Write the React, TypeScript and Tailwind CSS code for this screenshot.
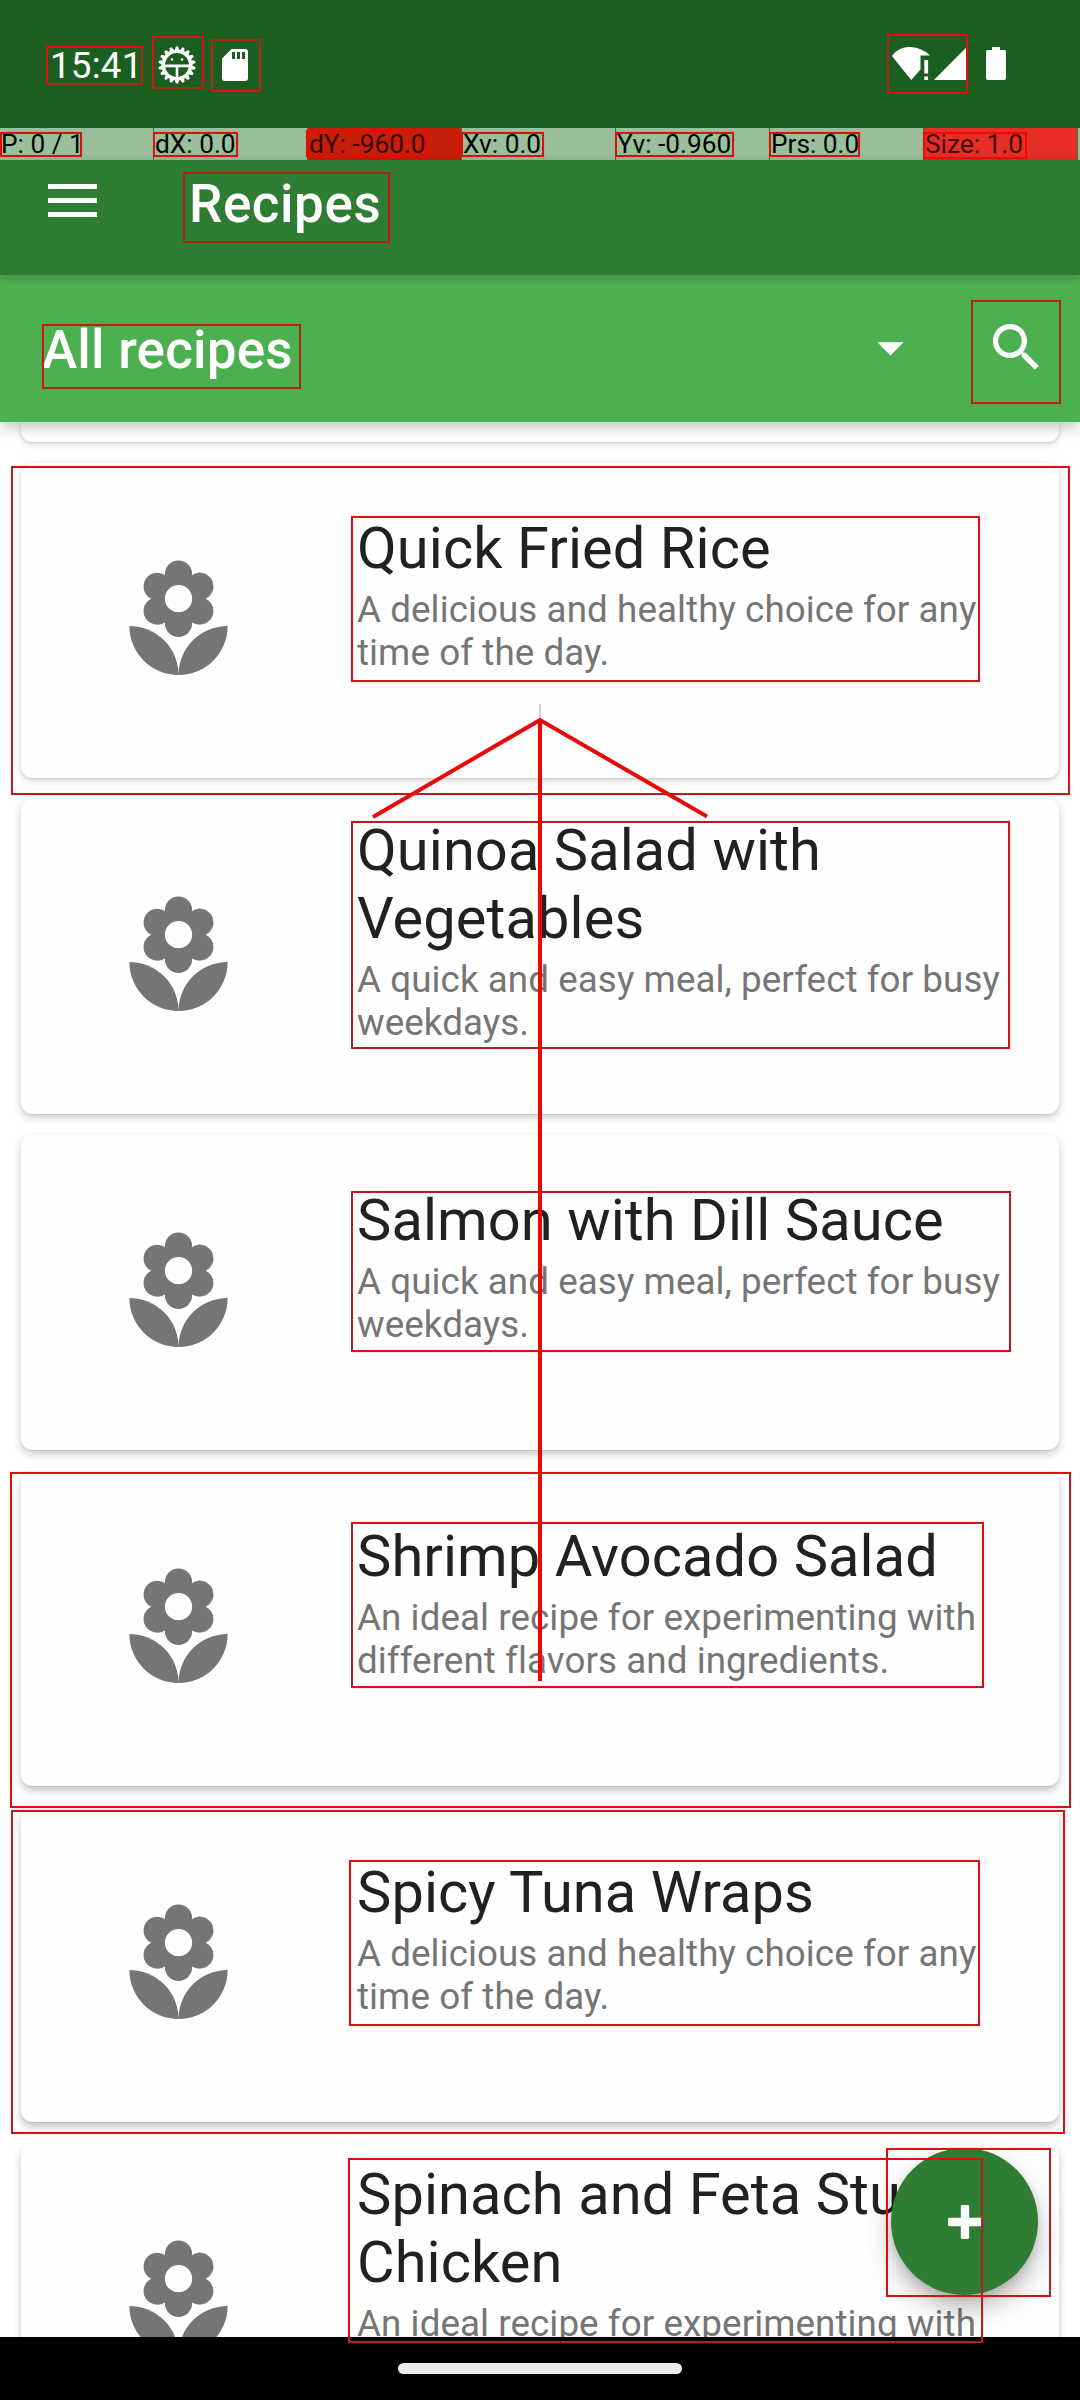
import React from "react";
import { MdArrowDropDown, MdLocalFlorist, MdSearch } from "react-icons/md";

const QUICK = "A quick and easy meal, perfect for busy weekdays.";
const DELICIOUS = "A delicious and healthy choice for any time of the day.";
const IDEAL = "An ideal recipe for experimenting with different flavors and ingredients.";

const recipes = [
  { title: "Quick Fried Rice", text: DELICIOUS, shadow: "shadow-[0_2px_7px_rgba(0,0,0,0.2),0_1px_1px_rgba(0,0,0,0.07)]" },
  { title: "Quinoa Salad with Vegetables", text: QUICK, shadow: "shadow-[0_3px_8px_rgba(0,0,0,0.22),0_1px_1px_rgba(0,0,0,0.07)]" },
  { title: "Salmon with Dill Sauce", text: QUICK, shadow: "shadow-[0_4px_8px_rgba(0,0,0,0.22),0_1px_1px_rgba(0,0,0,0.07)]" },
  { title: "Shrimp Avocado Salad", text: IDEAL, shadow: "shadow-[0_5px_8px_rgba(0,0,0,0.22),0_1px_1px_rgba(0,0,0,0.07)]" },
  { title: "Spicy Tuna Wraps", text: DELICIOUS, shadow: "shadow-[0_5px_9px_rgba(0,0,0,0.24),0_1px_1px_rgba(0,0,0,0.07)]" },
  { title: "Spinach and Feta Stuffed Chicken", text: IDEAL, shadow: "shadow-[0_6px_9px_rgba(0,0,0,0.24),0_1px_1px_rgba(0,0,0,0.07)]" },
];

const pointerCells = [
  { label: "P: 0 / 1", tone: "bg-[#99c09b] text-black" },
  { label: "dX: 0.0", tone: "bg-[#99c09b] text-black" },
  { label: "dY: -960.0", tone: "bg-[#c81e0c] text-[#3a0603]" },
  { label: "Xv: 0.0", tone: "bg-[#99c09b] text-black" },
  { label: "Yv: -0.960", tone: "bg-[#99c09b] text-black" },
  { label: "Prs: 0.0", tone: "bg-[#99c09b] text-black" },
  { label: "Size: 1.0", tone: "bg-[#e62e27] text-[#430a08]" },
];

const plain = "border-[#dd0f0f]";
const dim = "border-[#dd0f0f] border-r-[#a82a14] border-b-[#a82a14]";

// Bounds of each highlighted element: left, top, right, bottom.
const bounds: { box: [number, number, number, number]; tone: string }[] = [
  { box: [46, 46, 143, 85], tone: dim },
  { box: [152, 36, 204, 89], tone: "border-[#dd0f0f] border-b-[#a82a14]" },
  { box: [211, 39, 261, 92], tone: "border-[#a82a14] border-b-[#dd0f0f]" },
  { box: [887, 34, 968, 94], tone: "border-[#dd0f0f] border-l-[#a82a14]" },
  { box: [0, 132, 82, 157], tone: plain },
  { box: [153, 132, 238, 157], tone: plain },
  { box: [306, 130, 427, 157], tone: "border-[#f00a04]" },
  { box: [461, 132, 544, 157], tone: plain },
  { box: [615, 132, 734, 157], tone: plain },
  { box: [769, 132, 860, 157], tone: plain },
  { box: [923, 132, 1027, 159], tone: "border-[#f00a04]" },
  { box: [183, 172, 390, 243], tone: "border-[#a82a14] border-r-[#dd0f0f]" },
  { box: [42, 324, 301, 389], tone: dim },
  { box: [971, 300, 1061, 404], tone: "border-[#c81e0c] border-l-[#a82a14] border-r-[#a82a14]" },
  { box: [11, 466, 1070, 795], tone: "border-[#dd0f0f] border-l-[#b02024] border-b-[#b02024]" },
  { box: [351, 516, 980, 682], tone: plain },
  { box: [351, 821, 1010, 1049], tone: "border-[#b02024] border-r-[#dd0f0f]" },
  { box: [351, 1191, 1011, 1352], tone: "border-[#b02024] border-b-[#dd0f0f]" },
  { box: [10, 1472, 1071, 1808], tone: "border-[#dd0f0f] border-r-[#b02024]" },
  { box: [351, 1522, 984, 1688], tone: "border-[#dd0f0f] border-l-[#b02024]" },
  { box: [11, 1810, 1065, 2134], tone: "border-[#dd0f0f] border-l-[#b02024]" },
  { box: [349, 1860, 980, 2026], tone: plain },
  { box: [348, 2158, 983, 2343], tone: "border-[#dd0f0f] border-b-[#b02024] border-r-[#b02024]" },
  { box: [886, 2148, 1051, 2297], tone: "border-[#dd0f0f] border-r-[#b02024]" },
];

function BugIcon() {
  const teeth = Array.from({ length: 18 }, (_, i) => i * 20);
  return (
    <svg className="h-[40px] w-[40px]" viewBox="-20 -20 40 40" fill="#fff">
      {teeth.map((a) => (
        <path key={a} d="M-2.6 -14 L-1.1 -18.6 L1.1 -18.6 L2.6 -14 Z" transform={`rotate(${a})`} />
      ))}
      <circle r="13.6" fill="none" stroke="#fff" strokeWidth="3.4" />
      <path d="M-12.5 -0.4 H12.5 V2.2 H1.3 V13 H-1.3 V2.2 H-12.5 Z" />
      <circle cx="-5" cy="-5.5" r="1.3" />
      <circle cx="5" cy="-5.5" r="1.3" />
    </svg>
  );
}

function StatusBar() {
  return (
    <div className="flex h-[128px] items-start justify-between bg-[#1b5e20] text-white">
      <div className="flex">
        <span className="ml-[50px] mt-[44px] w-[107px] text-[36.75px] leading-[43px] tracking-[0.2px]">15:41</span>
        <div className="mt-[45px]">
          <BugIcon />
        </div>
        <svg className="ml-[25px] mt-[49px] h-[32px] w-[26px]" viewBox="0 0 26 32">
          <path d="M9.5 0H23a3 3 0 0 1 3 3v26a3 3 0 0 1-3 3H3a3 3 0 0 1-3-3V9.5Z" fill="#fff" />
          <path d="M10 3h3v7h-3ZM15 3h3v7h-3ZM20 3h3v7h-3Z" fill="#1b5e20" />
        </svg>
      </div>
      <svg className="mr-[74px] mt-[46px] h-[36px] w-[118px]" viewBox="0 0 118 36" fill="#fff">
        <path d="M4 10C8 4 15 1 21.500 1S37 4 42 9.500H32.500V23.500L23.200 34Z" />
        <path d="M36.300 14h3.800v13.500h-3.800ZM36.300 30.500h3.800V34h-3.800Z" />
        <path d="M46 34 78.300 1.500V34Z" />
        <path d="M104 1h8v3h4a2 2 0 0 1 2 2v26a2 2 0 0 1-2 2h-16a2 2 0 0 1-2-2V6a2 2 0 0 1 2-2h4Z" />
      </svg>
    </div>
  );
}

function PointerBar() {
  return (
    <div className="flex h-8 gap-px overflow-hidden bg-[#2e7d32]">
      {pointerCells.map((c) => (
        <div key={c.label} className={`${c.tone} w-[153px] shrink-0 whitespace-nowrap pl-px text-[26.25px] leading-[32px]`}>
          {c.label}
        </div>
      ))}
      <div className="flex-1 bg-[#99c09b]" />
    </div>
  );
}

function GestureArrow() {
  return (
    <svg className="absolute left-[360px] top-[700px] h-[990px] w-[360px]" viewBox="360 700 360 990" fill="none">
      <path d="M540 704V720" stroke="#dcb4c8" strokeWidth="1.5" />
      <path d="M373 817 540 720 707 816.500" stroke="#ea0808" strokeWidth="4" />
      <path d="M540 719V1681" stroke="#f50404" strokeWidth="4" />
    </svg>
  );
}

export default function App() {
  return (
    <div className="relative flex h-[2400px] w-[1080px] flex-col overflow-hidden bg-white font-[Roboto,sans-serif]">
      <StatusBar />
      <PointerBar />
      <header className="relative z-20 flex h-[115px] shrink-0 items-start bg-[#2e7d32] text-white shadow-[0_2px_10px_rgba(0,0,0,0.2)]">
        <div className="ml-[48px] mt-[24px] flex w-[49px] flex-col gap-[9px]">
          <div className="h-[5px] bg-white" />
          <div className="h-[5px] bg-white" />
          <div className="h-[5px] bg-white" />
        </div>
        <h1 className="ml-[92px] mt-[13px] text-[53px] font-medium leading-[62px] tracking-[0.55px]">Recipes</h1>
      </header>
      <div className="relative z-10 flex h-[147px] shrink-0 items-start bg-[#4caf50] text-white shadow-[0_4px_14px_rgba(0,0,0,0.25)]">
        <span className="ml-[42px] mt-[44px] text-[53px] font-medium leading-[62px] tracking-[0.2px]">All recipes</span>
        <MdArrowDropDown className="ml-auto mt-[41px] h-[63px] w-[63px]" />
        <MdSearch className="ml-[63px] mr-[32px] mt-[41px] h-[63px] w-[63px]" />
      </div>

      <main className="flex h-[1915px] shrink-0 flex-col gap-[21px] overflow-hidden px-[21px]">
        <div className="h-[20px] shrink-0 rounded-b-[11px] bg-[#fefefe] shadow-[0_2px_7px_rgba(0,0,0,0.18),0_1px_1px_rgba(0,0,0,0.07)]" />
        {recipes.map((r) => (
          <article key={r.title} className={`${r.shadow} flex h-[315px] shrink-0 items-center rounded-[11px] bg-[#fefefe]`}>
            <MdLocalFlorist className="mb-px ml-[92px] h-[131px] w-[131px] text-[#757575]" />
            <div className="ml-[113px] w-[670px] pb-[54px]">
              <h2 className="text-[57.75px] leading-[68px] tracking-[0.09px] text-[#212121]">{r.title}</h2>
              <p className="mt-[6px] text-[36.75px] leading-[43px] tracking-[0.08px] text-[#757575]">{r.text}</p>
            </div>
          </article>
        ))}
      </main>

      <nav className="relative flex h-[63px] shrink-0 justify-center bg-black pt-[26px]">
        <div className="h-[11px] w-[284px] rounded-full bg-[#ebebeb]" />
      </nav>

      <button className="absolute left-[891px] top-[2148px] flex h-[147px] w-[147px] items-center justify-center rounded-full bg-[#2e7d32] shadow-[0_14px_26px_rgba(0,0,0,0.26),0_4px_8px_rgba(0,0,0,0.12)]">
        <svg className="h-[34px] w-[34px]" viewBox="0 0 35 35" fill="#fff">
          <rect x="0" y="13.200" width="35" height="8.600" rx="1.500" />
          <rect x="13.200" y="0" width="8.600" height="35" rx="1.500" />
        </svg>
      </button>

      <div className="pointer-events-none absolute inset-0 z-30">
        {bounds.map(({ box: [l, t, r, b], tone }) => (
          <div key={`${l}-${t}`} className={`${tone} absolute border-2 shadow-[0_0_1px_rgba(221,15,15,0.35)]`} style={{ left: l, top: t, width: r - l, height: b - t }} />
        ))}
        <GestureArrow />
      </div>
    </div>
  );
}
